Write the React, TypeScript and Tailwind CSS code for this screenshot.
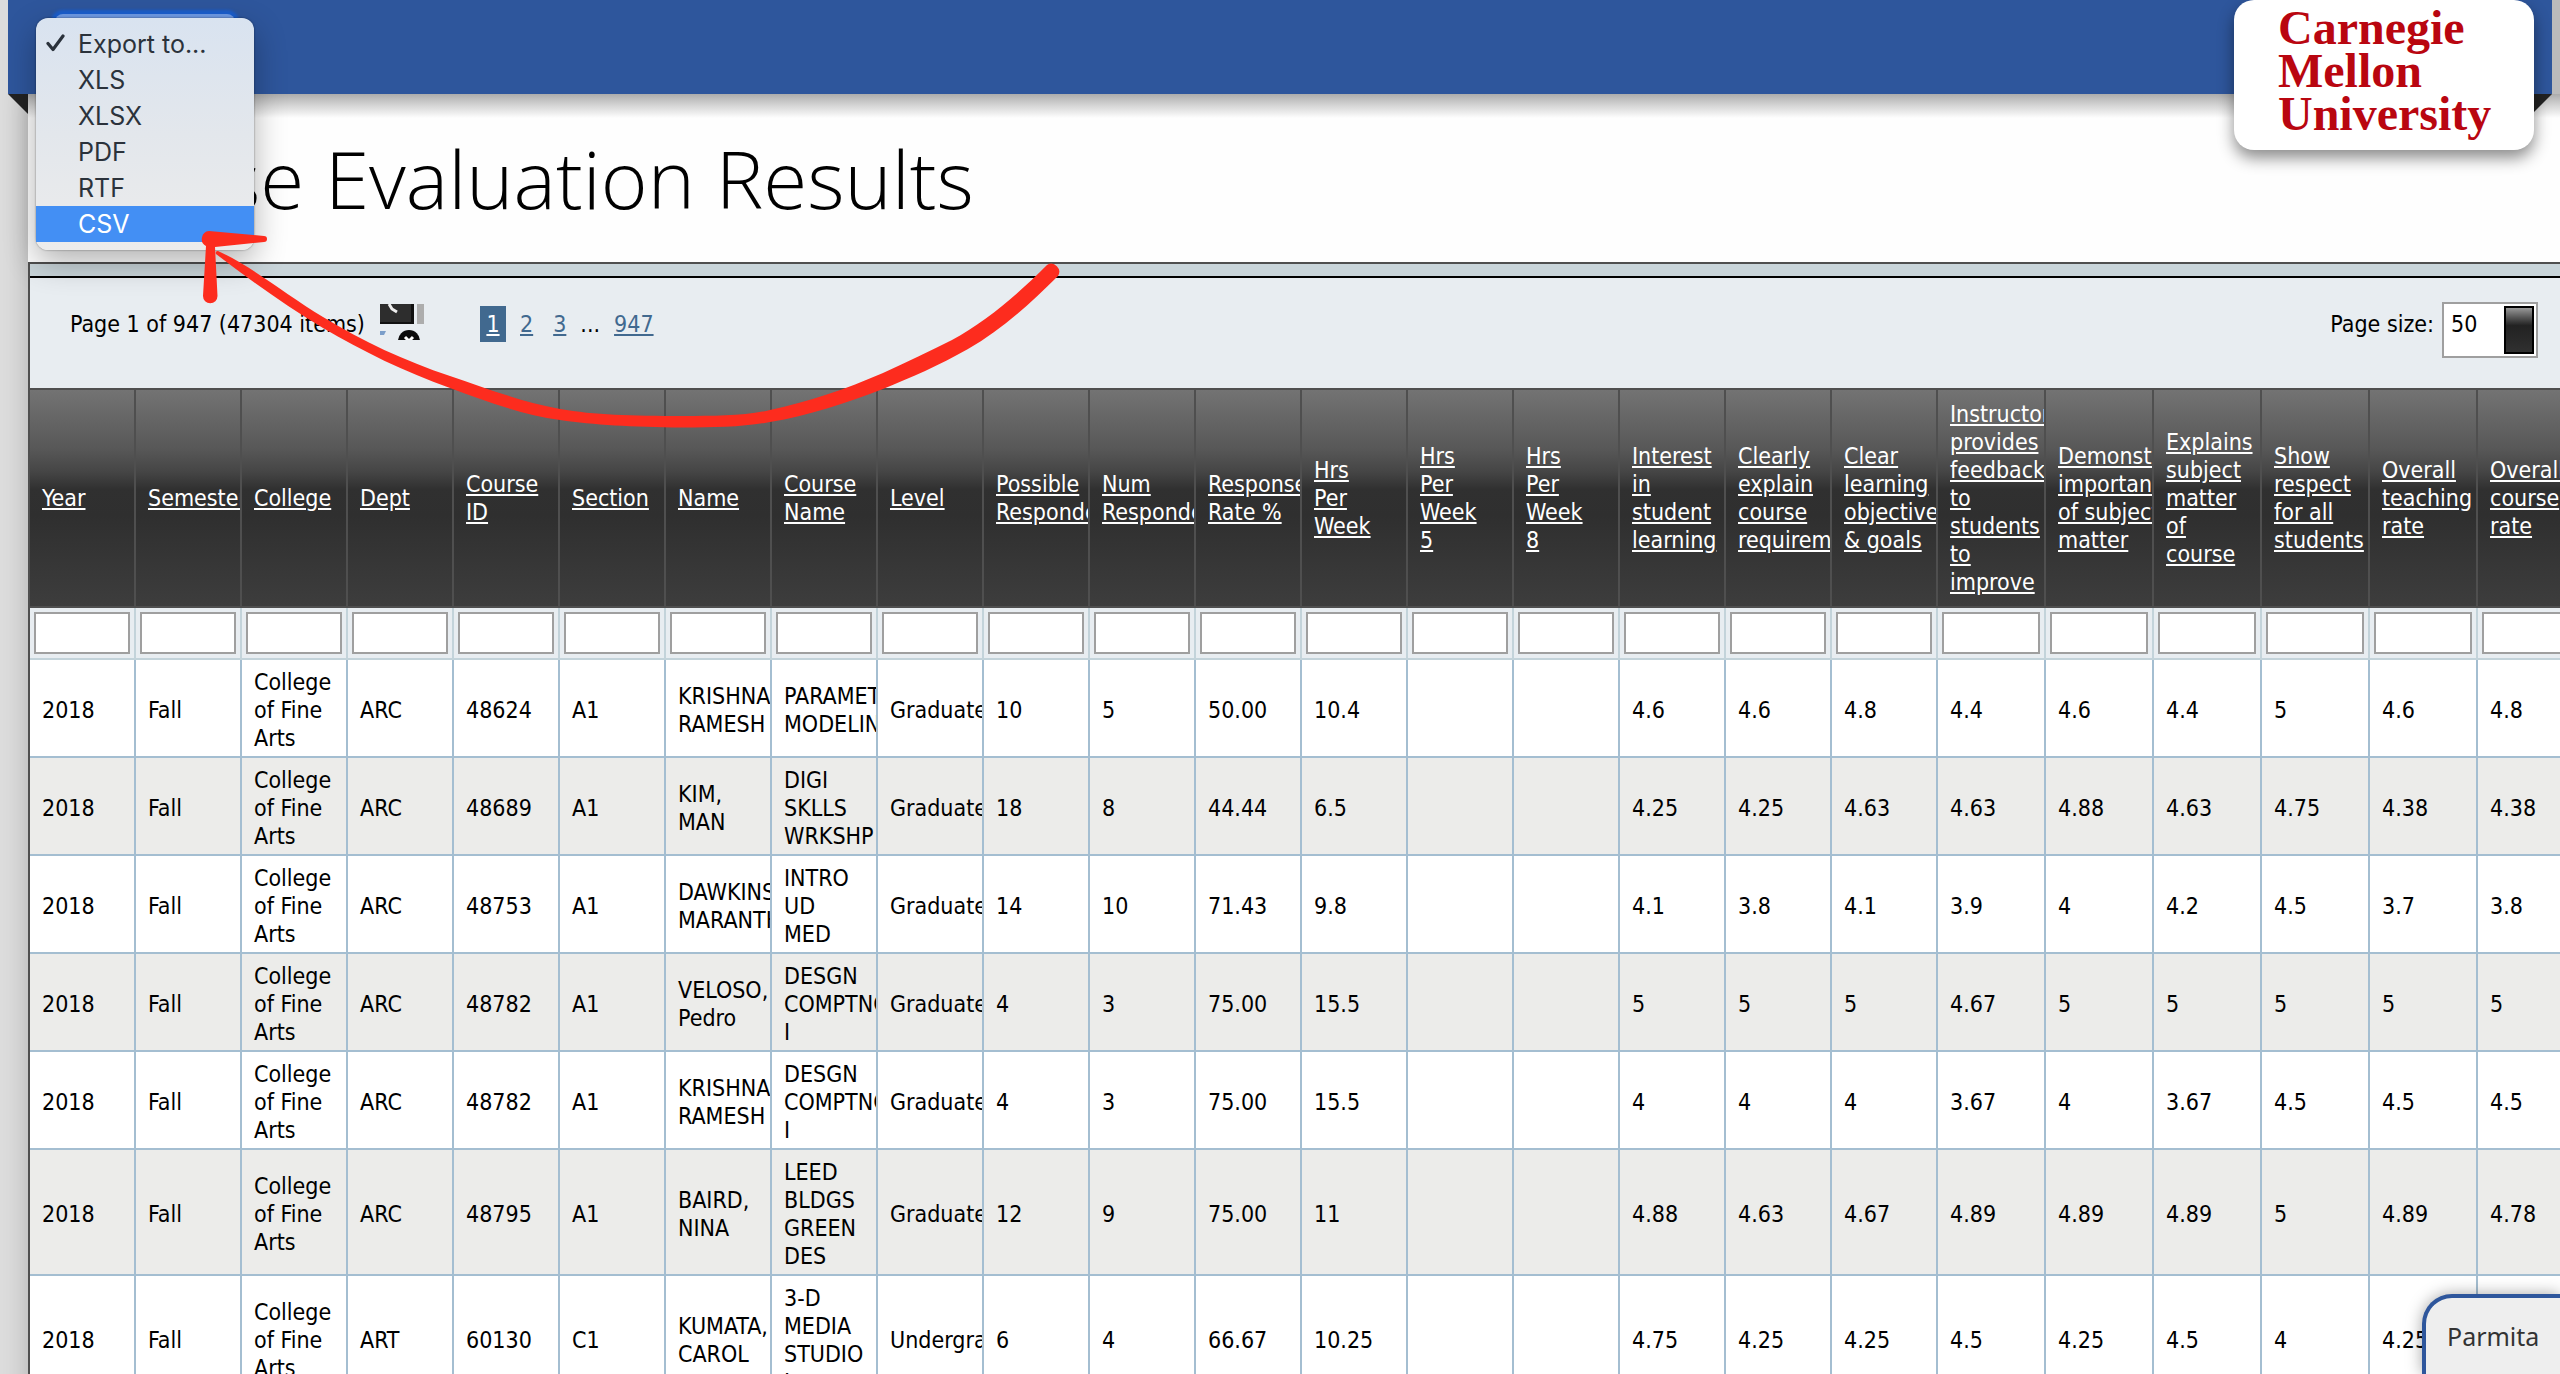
import React from "react";

type Column = { title: string; wide?: boolean };

const columns: Column[] = [
  { title: "Year" },
  { title: "Semester" },
  { title: "College" },
  { title: "Dept" },
  { title: "Course\nID" },
  { title: "Section" },
  { title: "Name" },
  { title: "Course\nName" },
  { title: "Level" },
  { title: "Possible\nRespondents" },
  { title: "Num\nRespondents" },
  { title: "Response\nRate %" },
  { title: "Hrs\nPer\nWeek" },
  { title: "Hrs\nPer\nWeek\n5" },
  { title: "Hrs\nPer\nWeek\n8" },
  { title: "Interest\nin\nstudent\nlearning" },
  { title: "Clearly\nexplain\ncourse\nrequirements" },
  { title: "Clear\nlearning\nobjectives\n& goals" },
  { title: "Instructor\nprovides\nfeedback\nto\nstudents\nto\nimprove", wide: true },
  { title: "Demonstrates\nimportance\nof subject\nmatter", wide: true },
  { title: "Explains\nsubject\nmatter\nof\ncourse", wide: true },
  { title: "Show\nrespect\nfor all\nstudents", wide: true },
  { title: "Overall\nteaching\nrate", wide: true },
  { title: "Overall\ncourse\nrate", wide: true },
];

const cfa = "College\nof Fine\nArts";

const rows: string[][] = [
  ["2018", "Fall", cfa, "ARC", "48624", "A1", "KRISHNAMURTI,\nRAMESH", "PARAMETRIC\nMODELING", "Graduate", "10", "5", "50.00", "10.4", "", "", "4.6", "4.6", "4.8", "4.4", "4.6", "4.4", "5", "4.6", "4.8"],
  ["2018", "Fall", cfa, "ARC", "48689", "A1", "KIM,\nMAN", "DIGI\nSKLLS\nWRKSHP", "Graduate", "18", "8", "44.44", "6.5", "", "", "4.25", "4.25", "4.63", "4.63", "4.88", "4.63", "4.75", "4.38", "4.38"],
  ["2018", "Fall", cfa, "ARC", "48753", "A1", "DAWKINS,\nMARANTHA", "INTRO\nUD\nMED", "Graduate", "14", "10", "71.43", "9.8", "", "", "4.1", "3.8", "4.1", "3.9", "4", "4.2", "4.5", "3.7", "3.8"],
  ["2018", "Fall", cfa, "ARC", "48782", "A1", "VELOSO,\nPedro", "DESGN\nCOMPTNG\nI", "Graduate", "4", "3", "75.00", "15.5", "", "", "5", "5", "5", "4.67", "5", "5", "5", "5", "5"],
  ["2018", "Fall", cfa, "ARC", "48782", "A1", "KRISHNAMURTI,\nRAMESH", "DESGN\nCOMPTNG\nI", "Graduate", "4", "3", "75.00", "15.5", "", "", "4", "4", "4", "3.67", "4", "3.67", "4.5", "4.5", "4.5"],
  ["2018", "Fall", cfa, "ARC", "48795", "A1", "BAIRD,\nNINA", "LEED\nBLDGS\nGREEN\nDES", "Graduate", "12", "9", "75.00", "11", "", "", "4.88", "4.63", "4.67", "4.89", "4.89", "4.89", "5", "4.89", "4.78"],
  ["2018", "Fall", cfa, "ART", "60130", "C1", "KUMATA,\nCAROL", "3-D\nMEDIA\nSTUDIO\nI", "Undergraduate", "6", "4", "66.67", "10.25", "", "", "4.75", "4.25", "4.25", "4.5", "4.25", "4.5", "4", "4.25", "4.25"],
];

const formats = ["Export to...", "XLS", "XLSX", "PDF", "RTF", "CSV"];

function Ribbon() {
  return (
    <header className="relative flex h-[94px] bg-[#dcdcdc] pl-2">
      <div className="flex-1 bg-[#2e569c]" />
      <div className="w-2 bg-[#bbbbbb]" />
      <svg className="absolute top-full left-2 h-5 w-5" viewBox="0 0 20 20" aria-hidden="true">
        <path d="M0 0H20V20Z" fill="#222" />
      </svg>
      <svg className="absolute top-full right-2 z-10 h-5 w-5" viewBox="0 0 20 20" aria-hidden="true">
        <path d="M0 0H20L0 20Z" fill="#222" />
      </svg>
      <div className="absolute top-0 right-[26px] z-20 h-[150px] w-[300px] rounded-[20px] bg-white pt-1.5 pl-[44px] font-['Liberation_Serif',serif] text-[48px] leading-[43px] font-bold text-[#b90610] shadow-[0_8px_16px_rgba(0,0,0,0.45)]">
        <p>Carnegie</p>
        <p>Mellon</p>
        <p>University</p>
      </div>
    </header>
  );
}

function ExportMenu() {
  return (
    <div className="absolute top-[14px] left-9 z-30 w-[218px]">
      <button
        type="button"
        aria-haspopup="listbox"
        aria-label="Export format"
        className="mx-auto block h-8 w-[180px] rounded-lg bg-[#6f9be6] shadow-[0_0_3px_4px_#1b5fcf]"
      />
      <ul
        role="listbox"
        aria-label="Export to"
        className="-mt-7 relative rounded-xl bg-linear-to-b from-[#d9e3f0] via-[#e3e7ec] to-[#ececec] pt-2 pb-2 font-['Inter',sans-serif] text-[25px] leading-9 text-[#2b323b] shadow-[0_0_2px_rgba(0,0,0,0.5),0_12px_32px_rgba(0,0,0,0.3)]"
      >
        {formats.map((f, i) => (
          <li
            key={f}
            role="option"
            aria-selected={i === 0}
            className={
              f === "CSV"
                ? "flex items-center bg-[#438ff4] pl-[42px] text-white"
                : i === 0
                  ? "flex items-center pl-2.5"
                  : "flex items-center pl-[42px]"
            }
          >
            {i === 0 && (
              <svg className="mr-3 h-5 w-5" viewBox="0 0 20 20" fill="none" aria-hidden="true">
                <path d="M2 9.5L7 15.5L17 2" stroke="#2b323b" strokeWidth="3.2" strokeLinecap="round" strokeLinejoin="round" />
              </svg>
            )}
            {f}
          </li>
        ))}
      </ul>
    </div>
  );
}

function PagerIcon() {
  return (
    <svg className="mb-1 h-9 w-11" viewBox="0 0 44 36" aria-hidden="true">
      <rect width="34" height="20" fill="#111" />
      <rect width="31" height="18" fill="#2d2d2d" />
      <path d="M9 0L12 5L17 8" stroke="#eee" strokeWidth="3" fill="none" />
      <rect x="37" width="7" height="20" fill="#adadad" />
      <path d="M0 27H6L4 31H0Z" fill="#7b9ec9" />
      <circle cx="29" cy="37" r="11" fill="#0c0c0c" />
      <path d="M25 33L29 37L33 33" stroke="#fff" strokeWidth="3" fill="none" />
    </svg>
  );
}

function Pager() {
  return (
    <div className="flex justify-between bg-[#e8edf1] pt-6 pr-[22px] pb-[30px] pl-10">
      <nav className="flex h-11 items-center" aria-label="Pages">
        <span className="w-[310px] whitespace-nowrap">Page 1 of 947 (47304 items)</span>
        <PagerIcon />
        <a href="#1" aria-current="page" className="ml-14 flex h-9 w-[26px] items-center justify-center bg-[#41698f] text-white underline">1</a>
        <a href="#2" className="ml-3.5 text-[#41698f] underline">2</a>
        <a href="#3" className="ml-5 text-[#41698f] underline">3</a>
        <span className="ml-3.5">...</span>
        <a href="#947" className="ml-3.5 text-[#41698f] underline">947</a>
      </nav>
      <div className="flex items-start">
        <label htmlFor="page-size" className="mr-2 leading-11">Page size:</label>
        <div className="flex h-14 w-24 items-start border-2 border-[#9f9f9f] bg-white">
          <select id="page-size" defaultValue="50" className="h-10 w-[60px] appearance-none bg-transparent pl-[7px]">
            <option>50</option>
            <option>100</option>
          </select>
          <span className="mt-0.5 h-12 w-[30px] border-2 border-black bg-linear-to-b from-[#999] via-[#222] via-40% to-[#303030]" />
        </div>
      </div>
    </div>
  );
}

function ResultsTable() {
  return (
    <table className="w-[2556px] table-fixed border-separate border-spacing-0">
      <colgroup>
        {columns.map((c, i) => (
          <col key={i} className={c.wide ? "w-[108px]" : "w-[106px]"} />
        ))}
      </colgroup>
      <thead>
        <tr>
          {columns.map((c, i) => (
            <th
              key={i}
              scope="col"
              className="h-[220px] overflow-hidden border-y-2 border-r-2 border-[#4f4f4f] bg-[linear-gradient(#737373,#585858_27%,#454545_38%,#303030_46%,#2f2f2f_58%,#3d3d3d)] pl-3 text-left align-middle font-normal whitespace-pre text-white"
            >
              <a href={`#sort-${i}`} className="underline">{c.title}</a>
            </th>
          ))}
        </tr>
        <tr>
          {columns.map((c, i) => (
            <td key={i} className="border-r-2 border-b-2 border-[#c3d3da] bg-[#e8edf1] p-1">
              <input
                type="text"
                aria-label={`Filter ${c.title.replace(/\n/g, " ")}`}
                className="block h-[42px] w-full border-2 border-[#9f9f9f] bg-white px-1"
              />
            </td>
          ))}
        </tr>
      </thead>
      <tbody>
        {rows.map((r, y) => (
          <tr key={y} className="bg-white even:bg-[#ececea]">
            {r.map((v, x) => (
              <td key={x} className="overflow-hidden border-r-2 border-b-2 border-[#a4bed1] pt-2 pb-1 pl-3 align-middle whitespace-pre">
                {v}
              </td>
            ))}
          </tr>
        ))}
      </tbody>
    </table>
  );
}

function Arrow() {
  return (
    <svg className="pointer-events-none absolute top-0 left-0 z-40 h-[440px] w-[1080px]" viewBox="0 0 1080 440" fill="#fd2c1e" aria-hidden="true">
      <path d="M209 231L264 236A3 3 0 0 1 264 242L215 247L217.500 296A7.200 7.200 0 0 1 203 296L206 246A8 8 0 0 1 209 231Z" />
      <path d="M218 251C250 265 285 294 323 317C362 341 405 361 450 376C485 388 522 402 560 409C595 415 630 416 683 416C715 416 745 416 770 410C808 402 846 389 883 373C907 362 930 351 952 340C985 322 1015 297 1047 265A8 8 0 0 1 1058 276C1030 304 1000 331 968 349C940 365 910 378 883 389C846 403 808 416 770 422C745 427 715 427.500 683 427.500C630 427 595 425 560 420C522 415 485 401 450 388C405 372 362 351 323 328C285 305 250 280 216 254A2 2 0 0 1 218 251Z" />
    </svg>
  );
}

export default function App() {
  return (
    <div className="relative h-screen overflow-hidden bg-[#dcdcdc] font-['DejaVu_Sans_Condensed','DejaVu_Sans',sans-serif] text-[23px] leading-7 text-black">
      <Ribbon />
      <ExportMenu />
      <main className="ml-7 bg-[#fefefe] shadow-[0_0_24px_rgba(0,0,0,0.2)]">
        <div className="bg-[linear-gradient(#acacac,#d0d0d0_10px,#fefefe_24px)] py-11 pl-5">
          <h1 className="font-['Open_Sans',sans-serif] text-[80px] leading-20 font-light whitespace-nowrap">Course Evaluation Results</h1>
        </div>
        <section className="overflow-hidden border-t-2 border-l-2 border-[#4f4f4f]" aria-label="Results">
          <div className="h-3.5 border-b-2 border-black bg-[#c9d5da]" />
          <Pager />
          <ResultsTable />
        </section>
      </main>
      <Arrow />
      <button
        type="button"
        className="absolute right-0 bottom-0 z-20 h-20 w-[138px] rounded-tl-[30px] border-t-4 border-l-4 border-[#2e569c] bg-[#eee] pl-[21px] text-left font-['Noto_Sans',sans-serif] text-[25px] text-[#333] shadow-[0_0_16px_rgba(0,0,0,0.35)]"
      >
        Parmita
      </button>
    </div>
  );
}
